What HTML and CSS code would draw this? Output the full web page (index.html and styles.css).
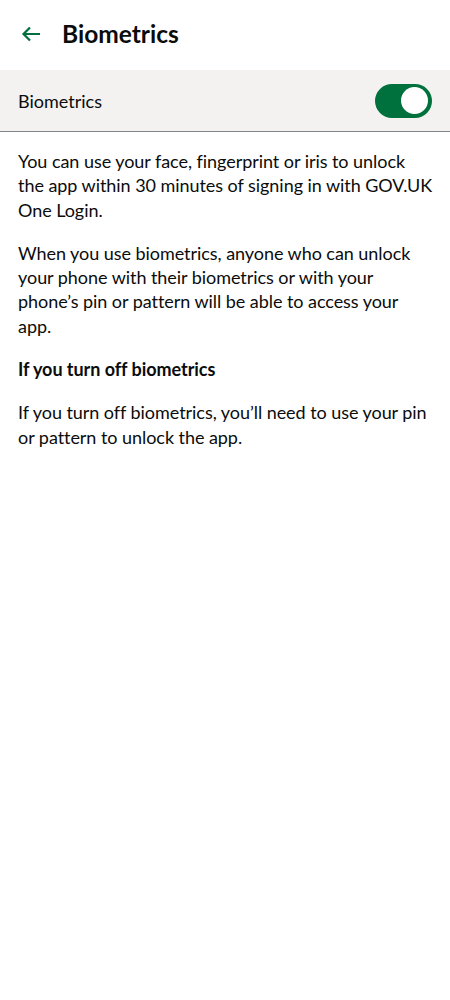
FILE: index.html
```html
<!DOCTYPE html>
<html lang="en">
<head>
<meta charset="utf-8">
<link rel="stylesheet" href="styles.css">
</head>
<body>
<header class="topbar">
  <svg class="back" width="20" height="16" viewBox="0 0 20 16" aria-hidden="true">
    <path d="M19 8H2.5M9 1.5L2.5 8L9 14.5" fill="none" stroke="#00703c" stroke-width="2.2"/>
  </svg>
  <h1 class="title">Biometrics</h1>
</header>
<div class="setting">
  <span class="setting-label">Biometrics</span>
  <span class="toggle"><span class="knob"></span></span>
</div>
<main class="content">
  <p>You can use your face, fingerprint or iris to unlock<br>the app within 30 minutes of signing in with GOV.UK<br>One Login.</p>
  <p>When you use biometrics, anyone who can unlock<br>your phone with their biometrics or with your<br>phone’s pin or pattern will be able to access your<br>app.</p>
  <h2>If you turn off biometrics</h2>
  <p>If you turn off biometrics, you’ll need to use your pin<br>or pattern to unlock the app.</p>
</main>
</body>
</html>
```
FILE: styles.css
```css
* { box-sizing: border-box; }
body {
  margin: 0;
  background: #fff;
  color: #0b0c0c;
  font-family: Lato, "Liberation Sans", sans-serif;
}
.topbar {
  height: 70px;
  display: flex;
  align-items: center;
  padding-left: 21px;
  padding-bottom: 4px;
}
.back { margin-top: 2px; }
.title {
  margin: 0 0 0 21px;
  font-size: 24.5px;
  font-weight: 700;
}
.setting {
  height: 62px;
  background: #f3f2f1;
  border-bottom: 1px solid #80868a;
  display: flex;
  align-items: center;
  justify-content: space-between;
  padding: 0 18px;
}
.setting-label { font-size: 18px; }
.toggle {
  width: 57px;
  height: 34px;
  border-radius: 17px;
  background: #00703c;
  display: flex;
  align-items: center;
  justify-content: flex-end;
  padding-right: 4px;
}
.knob {
  width: 27px;
  height: 27px;
  border-radius: 50%;
  background: #fff;
}
.content { padding: 17px 4px 0 18px; }
.content p, .content h2 {
  margin: 0 0 19px;
  font-size: 18px;
  line-height: 24.3px;
  font-weight: 400;
  letter-spacing: -0.05px;
}
.content h2 { font-weight: 700; }
```
